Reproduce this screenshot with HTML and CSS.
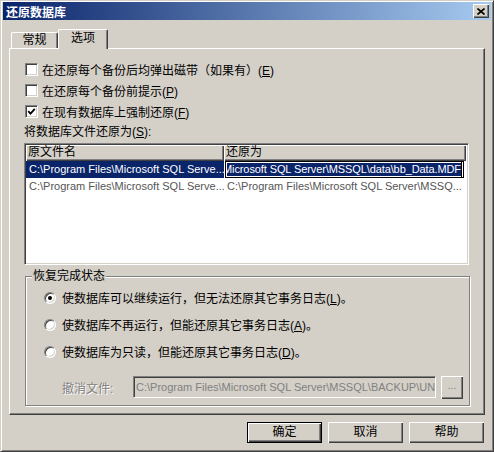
FILE: index.html
```html
<!DOCTYPE html>
<html>
<head>
  <meta charset="utf-8">
  <title>还原数据库</title>
  <link rel="stylesheet" href="styles.css">
</head>
<body>
  <div class="window">
    <div class="titlebar">
      <span class="title">还原数据库</span>
      <span class="close">
        <svg width="8" height="7" viewBox="0 0 8 7"><path d="M0.5 0.5 L7.5 6.5 M7.5 0.5 L0.5 6.5" stroke="#000" stroke-width="1.6" fill="none"/></svg>
      </span>
    </div>

    <div class="body">
      <div class="tabs">
        <div class="tab">常规</div>
        <div class="tab active">选项</div>
      </div>

      <div class="panel">
        <div class="check-row">
          <span class="check"></span>
          <span>在还原每个备份后均弹出磁带（如果有）(<u>E</u>)</span>
        </div>
        <div class="check-row">
          <span class="check"></span>
          <span>在还原每个备份前提示(<u>P</u>)</span>
        </div>
        <div class="check-row">
          <span class="check">
            <svg width="9" height="9" viewBox="0 0 9 9"><path d="M1.2 4.2 L3.5 6.6 L7.8 1.8" stroke="#000" stroke-width="1.8" fill="none"/></svg>
          </span>
          <span>在现有数据库上强制还原(<u>F</u>)</span>
        </div>

        <div class="caption">将数据库文件还原为(<u>S</u>):</div>

        <div class="listview">
          <div class="lv-head">
            <div class="lv-col1 head-cell">原文件名</div>
            <div class="lv-col2 head-cell">还原为</div>
          </div>
          <div class="lv-row selected">
            <div class="lv-col1 cell">C:\Program Files\Microsoft SQL Serve...</div>
            <div class="lv-col2 edit"><span>Microsoft SQL Server\MSSQL\data\bb_Data.MDF</span></div>
          </div>
          <div class="lv-row">
            <div class="lv-col1 cell">C:\Program Files\Microsoft SQL Serve...</div>
            <div class="lv-col2 cell">C:\Program Files\Microsoft SQL Server\MSSQ...</div>
          </div>
        </div>

        <fieldset class="group">
          <legend>恢复完成状态</legend>
          <div class="group-body">
            <div class="radio-row">
              <span class="radio on"></span>
              <span>使数据库可以继续运行，但无法还原其它事务日志(<u>L</u>)。</span>
            </div>
            <div class="radio-row">
              <span class="radio"></span>
              <span>使数据库不再运行，但能还原其它事务日志(<u>A</u>)。</span>
            </div>
            <div class="radio-row">
              <span class="radio"></span>
              <span>使数据库为只读，但能还原其它事务日志(<u>D</u>)。</span>
            </div>
            <div class="undo-row">
              <span class="undo-label">撤消文件:</span>
              <div class="field">C:\Program Files\Microsoft SQL Server\MSSQL\BACKUP\UN</div>
              <div class="browse">...</div>
            </div>
          </div>
        </fieldset>
      </div>

      <div class="buttons">
        <div class="btn default">确定</div>
        <div class="btn">取消</div>
        <div class="btn">帮助</div>
      </div>
    </div>
  </div>
</body>
</html>
```

FILE: styles.css
```css
* {
    box-sizing: border-box;
}
body {
    margin: 0;
    background: #d4d0c8;
    font-family: "Liberation Sans", "Noto Sans CJK SC", sans-serif;
    font-size: 12px;
    color: #000;
}
u {
    text-decoration: underline;
}
.window {
    width: 494px;
    height: 452px;
    background: #d4d0c8;
    border: 1px solid;
    border-color: #d4d0c8 #404040 #404040 #d4d0c8;
    box-shadow: inset 1px 1px #fff, inset -1px -1px #808080;
    padding: 1px 2px 2px 2px;
    display: flex;
    flex-direction: column;
}
.titlebar {
    height: 18px;
    flex: none;
    background: linear-gradient(to right, #0a246a, #a6caf0);
    display: flex;
    align-items: center;
    justify-content: space-between;
    padding: 0 2px 0 3px;
    color: #fff;
    font-weight: bold;
    font-family: "Noto Sans CJK SC", sans-serif;
    font-size: 12px;
}
.close {
    width: 16px;
    height: 14px;
    background: #d4d0c8;
    box-shadow: inset 1px 1px #fff, inset -1px -1px #404040, inset -2px -2px #808080;
    display: flex;
    align-items: center;
    justify-content: center;
}
.body {
    flex: 1;
    padding: 9px 6px 0 6px;
    display: flex;
    flex-direction: column;
}
.tabs {
    height: 19px;
    flex: none;
    display: flex;
    align-items: flex-end;
    padding-left: 2px;
}
.tab {
    width: 47px;
    height: 16px;
    border-top: 1px solid #fff;
    border-left: 1px solid #fff;
    border-right: 1px solid #404040;
    box-shadow: inset -1px 0 #808080;
    border-radius: 2px 2px 0 0;
    text-align: center;
    line-height: 14px;
}
.tab.active {
    width: 50px;
    height: 20px;
    margin-bottom: -1px;
    background: #d4d0c8;
    position: relative;
    z-index: 1;
    line-height: 17px;
}
.panel {
    height: 367px;
    flex: none;
    border: 1px solid;
    border-color: #fff #404040 #404040 #fff;
    box-shadow: inset -1px -1px #808080;
    padding: 10px 15px 0 14px;
}
.check-row {
    height: 21px;
    display: flex;
    align-items: center;
    gap: 4px;
    padding-left: 1px;
}
.check {
    width: 13px;
    height: 13px;
    flex: none;
    background: #fff;
    border: 1px solid;
    border-color: #808080 #fff #fff #808080;
    box-shadow: inset 1px 1px #404040, inset -1px -1px #d4d0c8;
    display: flex;
    align-items: center;
    justify-content: center;
}
.caption {
    margin-top: 2px;
    line-height: 16px;
    margin-bottom: 3px;
}
.listview {
    height: 122px;
    background: #fff;
    border: 1px solid;
    border-color: #808080 #fff #fff #808080;
    box-shadow: inset 1px 1px #404040, inset -1px -1px #d4d0c8;
    padding: 1px 2px 2px 1px;
    overflow: hidden;
}
.lv-head {
    height: 16px;
    display: flex;
}
.head-cell {
    background: #d4d0c8;
    box-shadow: inset 1px 1px #fff, inset -1px -1px #404040, inset -2px -2px #808080;
    padding-left: 2px;
    line-height: 15px;
}
.lv-col1 {
    width: 198px;
    flex: none;
}
.lv-col2 {
    flex: 1;
    min-width: 0;
}
.lv-row {
    height: 17px;
    display: flex;
    font-size: 11px;
    color: #555;
}
.cell {
    padding-left: 3px;
    line-height: 17px;
    white-space: nowrap;
    overflow: hidden;
}
.lv-row.selected .lv-col1 {
    background: #0a246a;
    color: #fff;
}
.edit {
    margin-left: 1px;
    margin-right: 2px;
    border: 1px solid #000;
    box-shadow: inset 0 0 0 1px #fff;
    background: #0a246a;
    color: #fff;
    display: flex;
    justify-content: flex-end;
    overflow: hidden;
    white-space: nowrap;
    line-height: 15px;
    padding-right: 1px;
    letter-spacing: -0.1px;
}
.edit span {
    flex: none;
    border-right: 1px solid #000;
}
.group {
    margin: 4px 0 0 1px;
    padding: 0 0 7px 0;
    width: 445px;
    border: 1px solid #808080;
    box-shadow: inset 1px 1px #fff, 1px 1px #fff;
    min-width: 0;
}
.group legend {
    margin-left: 6px;
    padding: 0 1px;
    line-height: 14px;
    background: #d4d0c8;
}
.group-body {
    padding: 1px 0 0 18px;
}
.radio-row {
    height: 27px;
    display: flex;
    align-items: center;
    gap: 6px;
}
.radio {
    width: 12px;
    height: 12px;
    flex: none;
    border-radius: 50%;
    background: #fff;
    border: 1px solid;
    border-color: #808080 #fff #fff #808080;
    box-shadow: inset 1px 1px #404040, inset -1px -1px #d4d0c8;
    display: flex;
    align-items: center;
    justify-content: center;
}
.radio.on::after {
    content: "";
    width: 4px;
    height: 4px;
    border-radius: 50%;
    background: #000;
}
.undo-row {
    margin-top: 11px;
    height: 22px;
    display: flex;
    align-items: center;
}
.undo-label {
    width: 71px;
    margin-left: 18px;
    flex: none;
    color: #808080;
    text-shadow: 1px 1px #fff;
}
.field {
    width: 303px;
    height: 22px;
    flex: none;
    border: 1px solid;
    border-color: #808080 #fff #fff #808080;
    box-shadow: inset 1px 1px #404040, inset -1px -1px #d4d0c8;
    padding: 0 2px;
    line-height: 20px;
    font-size: 11px;
    color: #808080;
    white-space: nowrap;
    overflow: hidden;
}
.browse {
    width: 22px;
    height: 23px;
    margin-left: 5px;
    flex: none;
    box-shadow: inset 1px 1px #fff, inset -1px -1px #404040, inset -2px -2px #808080;
    text-align: center;
    line-height: 20px;
    font-size: 10px;
    color: #808080;
}
.buttons {
    margin-top: 7px;
    display: flex;
    justify-content: flex-end;
    gap: 6px;
    padding-right: 1px;
}
.btn {
    width: 75px;
    height: 21px;
    box-shadow: inset 1px 1px #fff, inset -1px -1px #404040, inset -2px -2px #808080;
    text-align: center;
    line-height: 21px;
}
.btn.default {
    border: 1px solid #000;
    line-height: 19px;
}
```
